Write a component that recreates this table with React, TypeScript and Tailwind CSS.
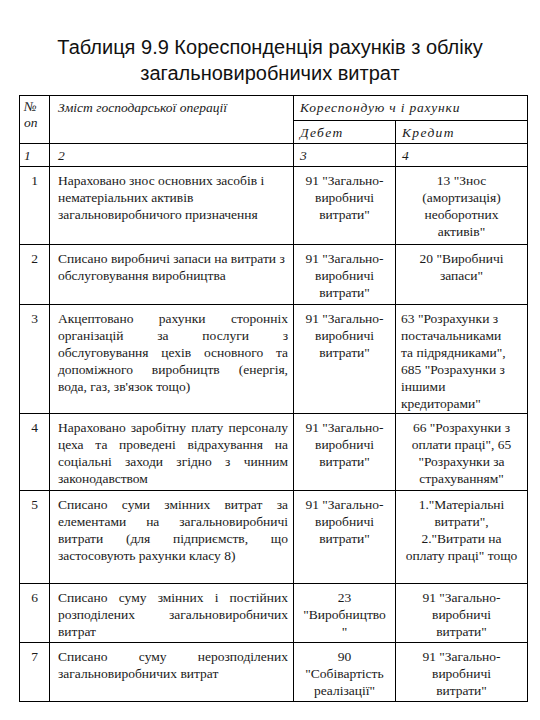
const ROWS = [
  {
    n: `1`,
    text: `Нараховано знос основних засобів і нематеріальних активів загальновиробничого призначення`,
    justify: false,
    debit: `91 "Загально-\nвиробничі\nвитрати"`,
    credit: `13 "Знос\n(амортизація)\nнеоборотних\nактивів"`,
    creditLeft: false,
    h: `h-[78px]`,
  },
  {
    n: `2`,
    text: `Списано виробничі запаси на витрати з обслуговування виробництва`,
    justify: false,
    debit: `91 "Загально-\nвиробничі\nвитрати"`,
    credit: `20 "Виробничі\nзапаси"`,
    creditLeft: false,
    h: `h-[60px]`,
  },
  {
    n: `3`,
    text: `Акцептовано рахунки сторонніх організацій за послуги з обслуговування цехів основного та допоміжного виробництв (енергія, вода, газ, зв\u0027язок тощо)`,
    justify: true,
    debit: `91 "Загально-\nвиробничі\nвитрати"`,
    credit: ` 63 "Розрахунки з\nпостачальниками\nта підрядниками",\n685 "Розрахунки з\nіншими\nкредиторами"`,
    creditLeft: true,
    h: `h-[109px]`,
  },
  {
    n: `4`,
    text: `Нараховано заробітну плату персоналу цеха та проведені відрахування на соціальні заходи згідно з чинним законодавством`,
    justify: true,
    debit: `91 "Загально-\nвиробничі\nвитрати"`,
    credit: `66 "Розрахунки з\nоплати праці", 65\n"Розрахунки за\nстрахуванням"`,
    creditLeft: false,
    h: `h-[77px]`,
  },
  {
    n: `5`,
    text: `Списано суми змінних витрат за елементами на загальновиробничі витрати (для підприємств, що застосовують рахунки класу 8)`,
    justify: true,
    debit: `91 "Загально-\nвиробничі\nвитрати"`,
    credit: `1."Матеріальні\nвитрати",\n2."Витрати на\nоплату праці" тощо`,
    creditLeft: false,
    h: `h-[93px]`,
  },
  {
    n: `6`,
    text: `Списано суму змінних і постійних розподілених загальновиробничих витрат`,
    justify: true,
    debit: `23\n"Виробництво\n"`,
    credit: `91 "Загально-\nвиробничі\nвитрати"`,
    creditLeft: false,
    h: `h-[59px]`,
  },
  {
    n: `7`,
    text: `Списано суму нерозподілених загальновиробничих витрат`,
    justify: true,
    debit: `90\n"Собівартість\nреалізації"`,
    credit: `91 "Загально-\nвиробничі\nвитрати"`,
    creditLeft: false,
    h: `h-[59px]`,
  },
];

const cols = `grid grid-cols-[30px_244px_102px_132px]`;
const cell = `border-r border-b border-black font-[Liberation_Serif]`;

function BodyRow({ row }: { row: (typeof ROWS)[number] }) {
  return (
    <div className={`${cols} ${row.h}`}>
      <div className={`${cell} pt-[5px] text-center`}>{row.n}</div>
      <div className={`${cell} pt-[5px] pl-[8px] pr-[5px] ${row.justify ? `text-justify` : `text-left`}`}>
        {row.text}
      </div>
      <div className={`${cell} pt-[5px] px-[4px] text-center whitespace-pre-line`}>{row.debit}</div>
      <div className={`${cell} pt-[5px] px-[5px] whitespace-pre-line ${row.creditLeft ? `text-left` : `text-center`}`}>
        {row.credit}
      </div>
    </div>
  );
}

export default function App() {
  return (
    <div className="w-[540px] h-[720px] bg-white text-black overflow-hidden">
      <h1 className="pt-[34px] text-center text-[20px] leading-[26px] font-[Liberation_Sans] font-normal text-[#111]">
        Таблиця 9.9 Кореспонденція рахунків з обліку
        <br />
        загальновиробничих витрат
      </h1>

      <div className="mt-[9px] ml-[19px] w-[509px] border-l border-t border-black font-[Liberation_Serif] text-[13.5px] leading-[17px] text-[#1a1a1a]">
        <div className={`${cols} grid-rows-[25px_23px] italic`}>
          <div className={`${cell} row-span-2 pt-[3px] pl-[4px] leading-[16px]`}>
            №
            <br />
            оп
          </div>
          <div className={`${cell} row-span-2 pt-[3px] pl-[8px]`}>Зміст господарської операції</div>
          <div className={`${cell} col-span-2 pt-[3px] pl-[6px] tracking-[0.06em]`}>Кореспондую ч і рахунки</div>
          <div className={`${cell} pt-[3px] pl-[6px] tracking-[0.1em]`}>Дебет</div>
          <div className={`${cell} pt-[3px] pl-[6px] tracking-[0.1em]`}>Кредит</div>
        </div>
        <div className={`${cols} h-[23px] italic`}>
          <div className={`${cell} pt-[3px] pl-[4px]`}>1</div>
          <div className={`${cell} pt-[3px] pl-[8px]`}>2</div>
          <div className={`${cell} pt-[3px] pl-[6px]`}>3</div>
          <div className={`${cell} pt-[3px] pl-[6px]`}>4</div>
        </div>
        {ROWS.map((row) => (
          <BodyRow key={row.n} row={row} />
        ))}
      </div>
    </div>
  );
}
